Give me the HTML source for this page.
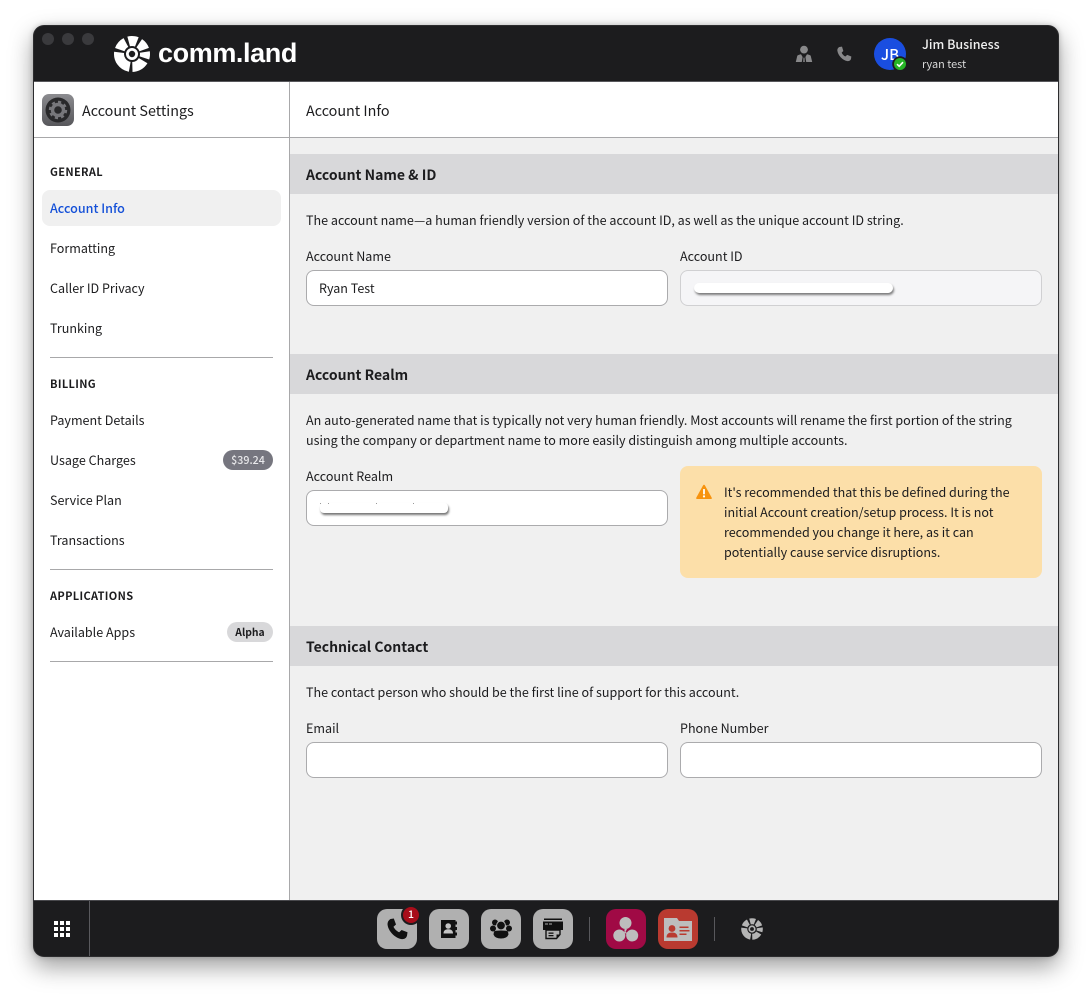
<!DOCTYPE html>
<html lang="en">
<head>
<meta charset="utf-8">
<title>Account Settings</title>
<style>
*{box-sizing:border-box}
html,body{margin:0;padding:0;width:1092px;height:998px;overflow:hidden;background:#fff}
body{position:relative;font-family:"Noto Sans CJK JP","Liberation Sans",sans-serif;color:#1c1c1e;font-size:12.55px}
.a{position:absolute;white-space:nowrap;line-height:20px;margin-top:1px}
.win{position:absolute;left:33px;top:25px;width:1026px;height:932px;border-radius:11px;background:#2c2c2e;box-shadow:0 10px 24px rgba(0,0,0,.38),0 0 6px rgba(0,0,0,.2)}
.box{position:absolute}
.top{left:34px;top:26px;width:1024px;height:56px;background:#1c1c1e;border-radius:10px 10px 0 0;border-bottom:1px solid #58585c}
.dock{left:34px;top:900px;width:1024px;height:56px;background:#1c1c1e;border-radius:0 0 10px 10px;border-top:1px solid #48484c}
.dot{position:absolute;top:33px;width:12px;height:12px;border-radius:50%;background:#3a3a3d}
.sec{position:absolute;left:290px;width:768px;height:40px;background:#d8d8da}
.h{font-size:14px;font-weight:700;left:306px}
.inp{position:absolute;height:36px;width:362px;background:#fff;border:1px solid #ababad;border-radius:8px}
.hr{position:absolute;left:50px;width:223px;height:1px;background:#a8a8aa}
.cap{font-size:11px;font-weight:700;letter-spacing:.35px;left:50px}
.nav{left:50px}
.tile{position:absolute;top:909px;width:40px;height:40px;border-radius:10px;background:#b0b0b0}
.tile svg{position:absolute;left:0;top:0}
.sep{position:absolute;top:917px;width:1px;height:24px;background:#58585c}
</style>
</head>
<body>
<div class="win"></div>

<!-- content -->
<div class="box" style="left:34px;top:82px;width:1024px;height:818px;background:#fff"></div>
<div class="box" style="left:290px;top:138px;width:768px;height:762px;background:#f0f0f0"></div>
<div class="box" style="left:289px;top:82px;width:1px;height:818px;background:#a8a8aa"></div>
<div class="box" style="left:34px;top:137px;width:1024px;height:1px;background:#a8a8aa"></div>

<!-- top bar -->
<div class="box top"></div>
<div class="dot" style="left:42px"></div>
<div class="dot" style="left:62px"></div>
<div class="dot" style="left:82px"></div>

<svg class="box" style="left:112px;top:34px" width="40" height="40" viewBox="0 0 40 40">
  <circle cx="20" cy="20" r="13" fill="none" stroke="#fff" stroke-width="10" pathLength="360" stroke-dasharray="87 13 42 13 37 12 36 11 27 13 57 12" transform="rotate(100 20 20)"/>
  <circle cx="20" cy="20" r="4.6" fill="none" stroke="#fff" stroke-width="2.8"/>
</svg>
<div class="a" style="left:158px;top:33px;font:700 27px/38px 'Liberation Sans',sans-serif;color:#fff;letter-spacing:-.4px">comm.land</div>

<svg class="box" style="left:795px;top:45px" width="18" height="18" viewBox="0 0 18 18" fill="#88888a">
  <circle cx="9" cy="4.6" r="3.9"/>
  <path d="M.8 17 L2.3 10.8 Q2.8 9.8 6 9.2 L7.6 12 L6.8 17Z M17.2 17 L15.7 10.8 Q15.2 9.8 12 9.2 L10.4 12 L11.2 17Z M8.2 17 L8.5 12.6 H9.5 L9.8 17Z"/>
</svg>
<svg class="box" style="left:836px;top:46px" width="16" height="16" viewBox="0 0 24 24" fill="#88888a">
  <path d="M5 1.5 L9 1 L11 7.5 L8.5 10 C9.5 12.5 11.5 14.8 14 15.8 L16.8 13.3 L23 15.8 L22.5 19.5 C21.5 22 19.5 23 17 22.7 C9.5 21.5 3 14 2 7 C1.7 4.5 3 2.5 5 1.5Z"/>
</svg>

<div class="box" style="left:874px;top:38px;width:32px;height:32px;border-radius:50%;background:#1a4ee0"></div>
<div class="a" style="left:874px;top:44px;width:32px;text-align:center;color:#fff;font-size:15px;font-weight:500">JB</div>
<svg class="box" style="left:892px;top:56px" width="16" height="16" viewBox="0 0 16 16">
  <circle cx="8" cy="8" r="7.8" fill="#1c1c1e"/>
  <circle cx="8" cy="8" r="6" fill="#26b526"/>
  <path d="M5 8.2 L7.2 10.2 L11 6.2" fill="none" stroke="#fff" stroke-width="1.6"/>
</svg>
<div class="a" style="left:922px;top:33px;color:#f0f0f0;font-size:12.5px;font-weight:500">Jim Business</div>
<div class="a" style="left:922px;top:53px;color:#d8d8d8;font-size:10.9px">ryan test</div>

<!-- sub-header -->
<div class="box" style="left:42px;top:94px;width:32px;height:32px;border-radius:7px;background:linear-gradient(#8c8c90,#57575b)"></div>
<svg class="box" style="left:42px;top:94px" width="32" height="32" viewBox="0 0 32 32">
  <circle cx="16" cy="16" r="12.5" fill="#29292b"/>
  <circle cx="16" cy="16" r="5.5" fill="none" stroke="#77777b" stroke-width="3.4"/>
  <circle cx="16" cy="16" r="8" fill="none" stroke="#77777b" stroke-width="2.4" pathLength="64" stroke-dasharray="4 4"/>
</svg>
<div class="a" style="left:82px;top:100px;font-size:14.35px">Account Settings</div>
<div class="a" style="left:306px;top:100px;font-size:14.35px">Account Info</div>

<!-- sidebar -->
<div class="a cap" style="top:161px">GENERAL</div>
<div class="box" style="left:42px;top:190px;width:239px;height:36px;background:#f0f0f0;border-radius:8px"></div>
<div class="a nav" style="top:197px;color:#1450d8;font-weight:500">Account Info</div>
<div class="a nav" style="top:237px">Formatting</div>
<div class="a nav" style="top:277px">Caller ID Privacy</div>
<div class="a nav" style="top:317px">Trunking</div>
<div class="hr" style="top:357px"></div>
<div class="a cap" style="top:373px">BILLING</div>
<div class="a nav" style="top:409px">Payment Details</div>
<div class="a nav" style="top:449px">Usage Charges</div>
<div class="a" style="left:223px;top:449px;width:50px;height:20px;border-radius:10px;background:#76767f;color:#e8e8ea;text-align:center;font-size:10.7px;font-weight:500;line-height:22px">$39.24</div>
<div class="a nav" style="top:489px">Service Plan</div>
<div class="a nav" style="top:529px">Transactions</div>
<div class="hr" style="top:569px"></div>
<div class="a cap" style="top:585px">APPLICATIONS</div>
<div class="a nav" style="top:621px">Available Apps</div>
<div class="a" style="left:227px;top:621px;width:46px;height:20px;border-radius:10px;background:#d8d8da;color:#1c1c1e;text-align:center;font-size:10.4px;font-weight:700">Alpha</div>
<div class="hr" style="top:661px"></div>

<!-- Section 1 -->
<div class="sec" style="top:154px"></div>
<div class="a h" style="top:164px">Account Name &amp; ID</div>
<div class="a" style="left:306px;top:209px">The account name—a human friendly version of the account ID, as well as the unique account ID string.</div>
<div class="a" style="left:306px;top:245px">Account Name</div>
<div class="a" style="left:680px;top:245px">Account ID</div>
<div class="inp" style="left:306px;top:270px"></div>
<div class="a" style="left:319px;top:277px">Ryan Test</div>
<div class="inp" style="left:680px;top:270px;background:#f5f5f7;border-color:#d0d0d2"></div>
<div class="box" style="left:694px;top:283px;width:199px;height:10px;border-radius:5px;background:#fff;box-shadow:1px 2px 2px rgba(0,0,0,.5)"></div>

<!-- Section 2 -->
<div class="sec" style="top:354px"></div>
<div class="a h" style="top:364px">Account Realm</div>
<div class="a" style="left:306px;top:409px">An auto-generated name that is typically not very human friendly. Most accounts will rename the first portion of the string</div>
<div class="a" style="left:306px;top:429px">using the company or department name to more easily distinguish among multiple accounts.</div>
<div class="a" style="left:306px;top:465px">Account Realm</div>
<div class="inp" style="left:306px;top:490px"></div>
<div class="box" style="left:320px;top:503px;width:128px;height:10px;border-radius:4px;background:#fff;box-shadow:1px 2px 2px rgba(0,0,0,.55)"></div>
<svg class="box" style="left:320px;top:502px" width="100" height="4" viewBox="0 0 100 4" fill="#999">
  <rect x="0" y="1" width="1" height="1"/><rect x="8" y="1" width="1" height="1"/><rect x="56" y="1" width="1" height="1"/><rect x="93" y="1" width="1" height="1"/>
</svg>

<div class="box" style="left:680px;top:466px;width:362px;height:112px;background:#fcdfa9;border-radius:8px"></div>
<svg class="box" style="left:696px;top:484px" width="16" height="16" viewBox="0 0 16 16">
  <path d="M8 .8 Q8.6 .8 9 1.5 L15.7 13.6 Q16.2 15 14.8 15 H1.2 Q-.2 15 .3 13.6 L7 1.5 Q7.4 .8 8 .8Z" fill="#f7930f"/>
  <rect x="7.1" y="5" width="1.8" height="5.4" rx=".6" fill="#fff"/>
  <circle cx="8" cy="12.4" r="1.1" fill="#fff"/>
</svg>
<div class="a" style="left:724px;top:481px">It's recommended that this be defined during the</div>
<div class="a" style="left:724px;top:501px">initial Account creation/setup process. It is not</div>
<div class="a" style="left:724px;top:521px">recommended you change it here, as it can</div>
<div class="a" style="left:724px;top:541px">potentially cause service disruptions.</div>

<!-- Section 3 -->
<div class="sec" style="top:626px"></div>
<div class="a h" style="top:636px">Technical Contact</div>
<div class="a" style="left:306px;top:681px">The contact person who should be the first line of support for this account.</div>
<div class="a" style="left:306px;top:717px">Email</div>
<div class="a" style="left:680px;top:717px">Phone Number</div>
<div class="inp" style="left:306px;top:742px"></div>
<div class="inp" style="left:680px;top:742px"></div>

<!-- dock -->
<div class="box dock"></div>
<div class="box" style="left:89px;top:901px;width:1px;height:55px;background:#5a5a5e"></div>
<svg class="box" style="left:54px;top:921px" width="16" height="16" viewBox="0 0 16 16" fill="#fff">
  <rect x="0" y="0" width="4" height="4"/><rect x="6" y="0" width="4" height="4"/><rect x="12" y="0" width="4" height="4"/>
  <rect x="0" y="6" width="4" height="4"/><rect x="6" y="6" width="4" height="4"/><rect x="12" y="6" width="4" height="4"/>
  <rect x="0" y="12" width="4" height="4"/><rect x="6" y="12" width="4" height="4"/><rect x="12" y="12" width="4" height="4"/>
</svg>

<div class="tile" style="left:377px">
  <svg width="40" height="40" viewBox="0 0 40 40" fill="#111">
    <path d="M13.5 10 L16.8 9.5 L19 15.5 L16.5 17.8 C17.5 20 19.7 22.3 22.2 23.3 L24.6 21 L30.5 23.3 L30 26.8 C29.2 29.4 27.2 30.4 24.7 30.1 C18 29.1 11.4 22.2 10.6 16 C10.3 13.3 11.5 11.2 13.5 10Z"/>
  </svg>
</div>
<div class="box" style="left:401px;top:905px;width:20px;height:20px;border-radius:50%;background:#1c1c1e"></div>
<div class="box" style="left:403px;top:907px;width:16px;height:16px;border-radius:50%;background:#a80d1a;color:#fff;font-size:10.5px;line-height:16px;text-align:center;font-weight:500">1</div>

<div class="tile" style="left:429px">
  <svg width="40" height="40" viewBox="0 0 40 40">
    <rect x="12" y="11" width="14.5" height="18" fill="#111"/>
    <rect x="26.5" y="12.5" width="1.5" height="3" fill="#111"/><rect x="26.5" y="18" width="1.5" height="3" fill="#111"/><rect x="26.5" y="23.5" width="1.5" height="3" fill="#111"/>
    <circle cx="19.2" cy="17" r="2.8" fill="#c4c4c4"/>
    <path d="M14.5 24.5 C14.5 21.5 16.5 20.3 19.2 20.3 C22 20.3 24 21.5 24 24.5Z" fill="#c4c4c4"/>
  </svg>
</div>
<div class="tile" style="left:481px">
  <svg width="40" height="40" viewBox="0 0 40 40" fill="#111">
    <circle cx="14" cy="13.5" r="3"/><circle cx="26" cy="13.5" r="3"/>
    <circle cx="12" cy="19.5" r="3"/><circle cx="28" cy="19.5" r="3"/>
    <circle cx="20" cy="16.5" r="4.4" stroke="#b0b0b0" stroke-width="1"/>
    <path d="M13 22.5 Q14 21.5 20 21.5 Q26 21.5 27 22.5 L27.5 25.5 Q26 29.5 20 29.5 Q14 29.5 12.5 25.5Z"/>
  </svg>
</div>
<div class="tile" style="left:533px">
  <svg width="40" height="40" viewBox="0 0 40 40" fill="#111">
    <rect x="11" y="9.5" width="18" height="1.5"/>
    <rect x="10" y="12.5" width="20" height="8.5"/>
    <rect x="12" y="14.5" width="3" height="1" fill="#b0b0b0"/><rect x="16" y="14.5" width="3" height="1" fill="#b0b0b0"/>
    <path d="M13 21 H27 V25.5 L23.5 29.5 H13Z" fill="none" stroke="#111" stroke-width="1.4"/>
    <rect x="15.5" y="23.5" width="5" height="1.3"/><rect x="15.5" y="26" width="5" height="1.3"/>
    <path d="M23.5 29.5 V25.5 H27Z"/>
  </svg>
</div>
<div class="sep" style="left:589px"></div>
<div class="tile" style="left:606px;background:#a00a45">
  <svg width="40" height="40" viewBox="0 0 40 40" fill="#bdbdbd">
    <circle cx="19.5" cy="14" r="6"/><circle cx="13.3" cy="26.5" r="6"/><circle cx="26.2" cy="26.5" r="6"/>
    <path d="M18.5 20 L21 20 L19.5 23 L21.5 24 L20 27 L20.5 24.8 L18.5 24Z"/>
  </svg>
</div>
<div class="tile" style="left:658px;background:#b93a30">
  <svg width="40" height="40" viewBox="0 0 40 40">
    <path d="M6 9 H19 L21 12 H34 V32 H6Z" fill="#bdbdbd"/>
    <circle cx="14" cy="19.5" r="3.4" fill="#b93a30"/>
    <path d="M8.5 28.5 C8.5 25 10.5 23.5 14 23.5 C17.5 23.5 19.5 25 19.5 28.5Z" fill="#b93a30"/>
    <rect x="21.5" y="17.5" width="9" height="1.5" fill="#b93a30"/><rect x="21.5" y="21" width="10" height="1.5" fill="#b93a30"/><rect x="21.5" y="24.5" width="7" height="1.5" fill="#b93a30"/>
  </svg>
</div>
<div class="sep" style="left:714px"></div>
<svg class="box" style="left:740px;top:917px" width="24" height="24" viewBox="0 0 40 40">
  <circle cx="20" cy="20" r="13" fill="none" stroke="#b4b4b4" stroke-width="10" pathLength="360" stroke-dasharray="87 13 42 13 37 12 36 11 27 13 57 12" transform="rotate(100 20 20)"/>
  <circle cx="20" cy="20" r="4.6" fill="none" stroke="#b4b4b4" stroke-width="2.8"/>
</svg>
</body>
</html>
